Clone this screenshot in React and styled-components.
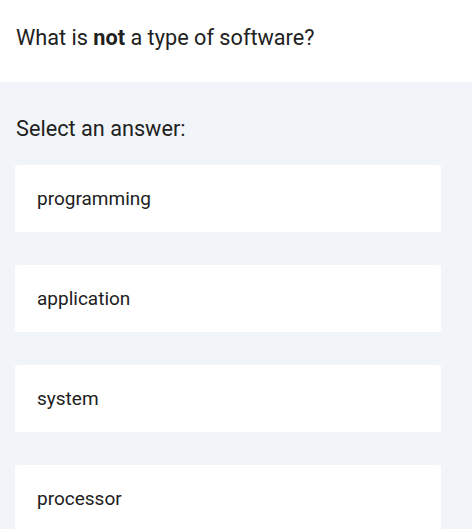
import React from "react";
import styled, { createGlobalStyle } from "styled-components";

const Global = createGlobalStyle`
  html, body { margin: 0; padding: 0; background: #ffffff; }
  body { font-family: Roboto, "Noto Sans", sans-serif; color: #212121; overflow: hidden; }
`;

const Page = styled.div`
  width: 474px;
  height: 532px;
  overflow: hidden;
  background: #ffffff;
`;

const Header = styled.div`
  height: 82px;
  box-sizing: border-box;
  padding: 24px 16px 0;
`;

const Title = styled.h1`
  margin: 0;
  font-size: 21.7px;
  font-weight: 400;
  line-height: 28px;
  color: #212121;
  b { font-weight: 700; }
`;

const Panel = styled.div`
  width: 472px;
  height: 447px;
  box-sizing: border-box;
  background: #f1f5f9;
  padding: 33px 31px 0 15px;
  overflow: hidden;
  display: flex;
  flex-direction: column;
`;

const Prompt = styled.div`
  font-size: 21.7px;
  line-height: 28px;
  padding-left: 1px;
  margin-bottom: 22px;
`;

const Options = styled.div`
  display: flex;
  flex-direction: column;
  gap: 33px;
`;

const Option = styled.div`
  flex: none;
  height: 67px;
  background: #ffffff;
  border-radius: 3px;
  display: flex;
  align-items: center;
  padding-left: 22px;
  font-size: 19px;
  color: #212121;
`;

const answers = ["programming", "application", "system", "processor"];

export default function App() {
  return (
    <Page>
      <Global />
      <Header>
        <Title>
          What is <b>not</b> a type of software?
        </Title>
      </Header>
      <Panel>
        <Prompt>Select an answer:</Prompt>
        <Options>
          {answers.map((a) => (
            <Option key={a}>{a}</Option>
          ))}
        </Options>
      </Panel>
    </Page>
  );
}
